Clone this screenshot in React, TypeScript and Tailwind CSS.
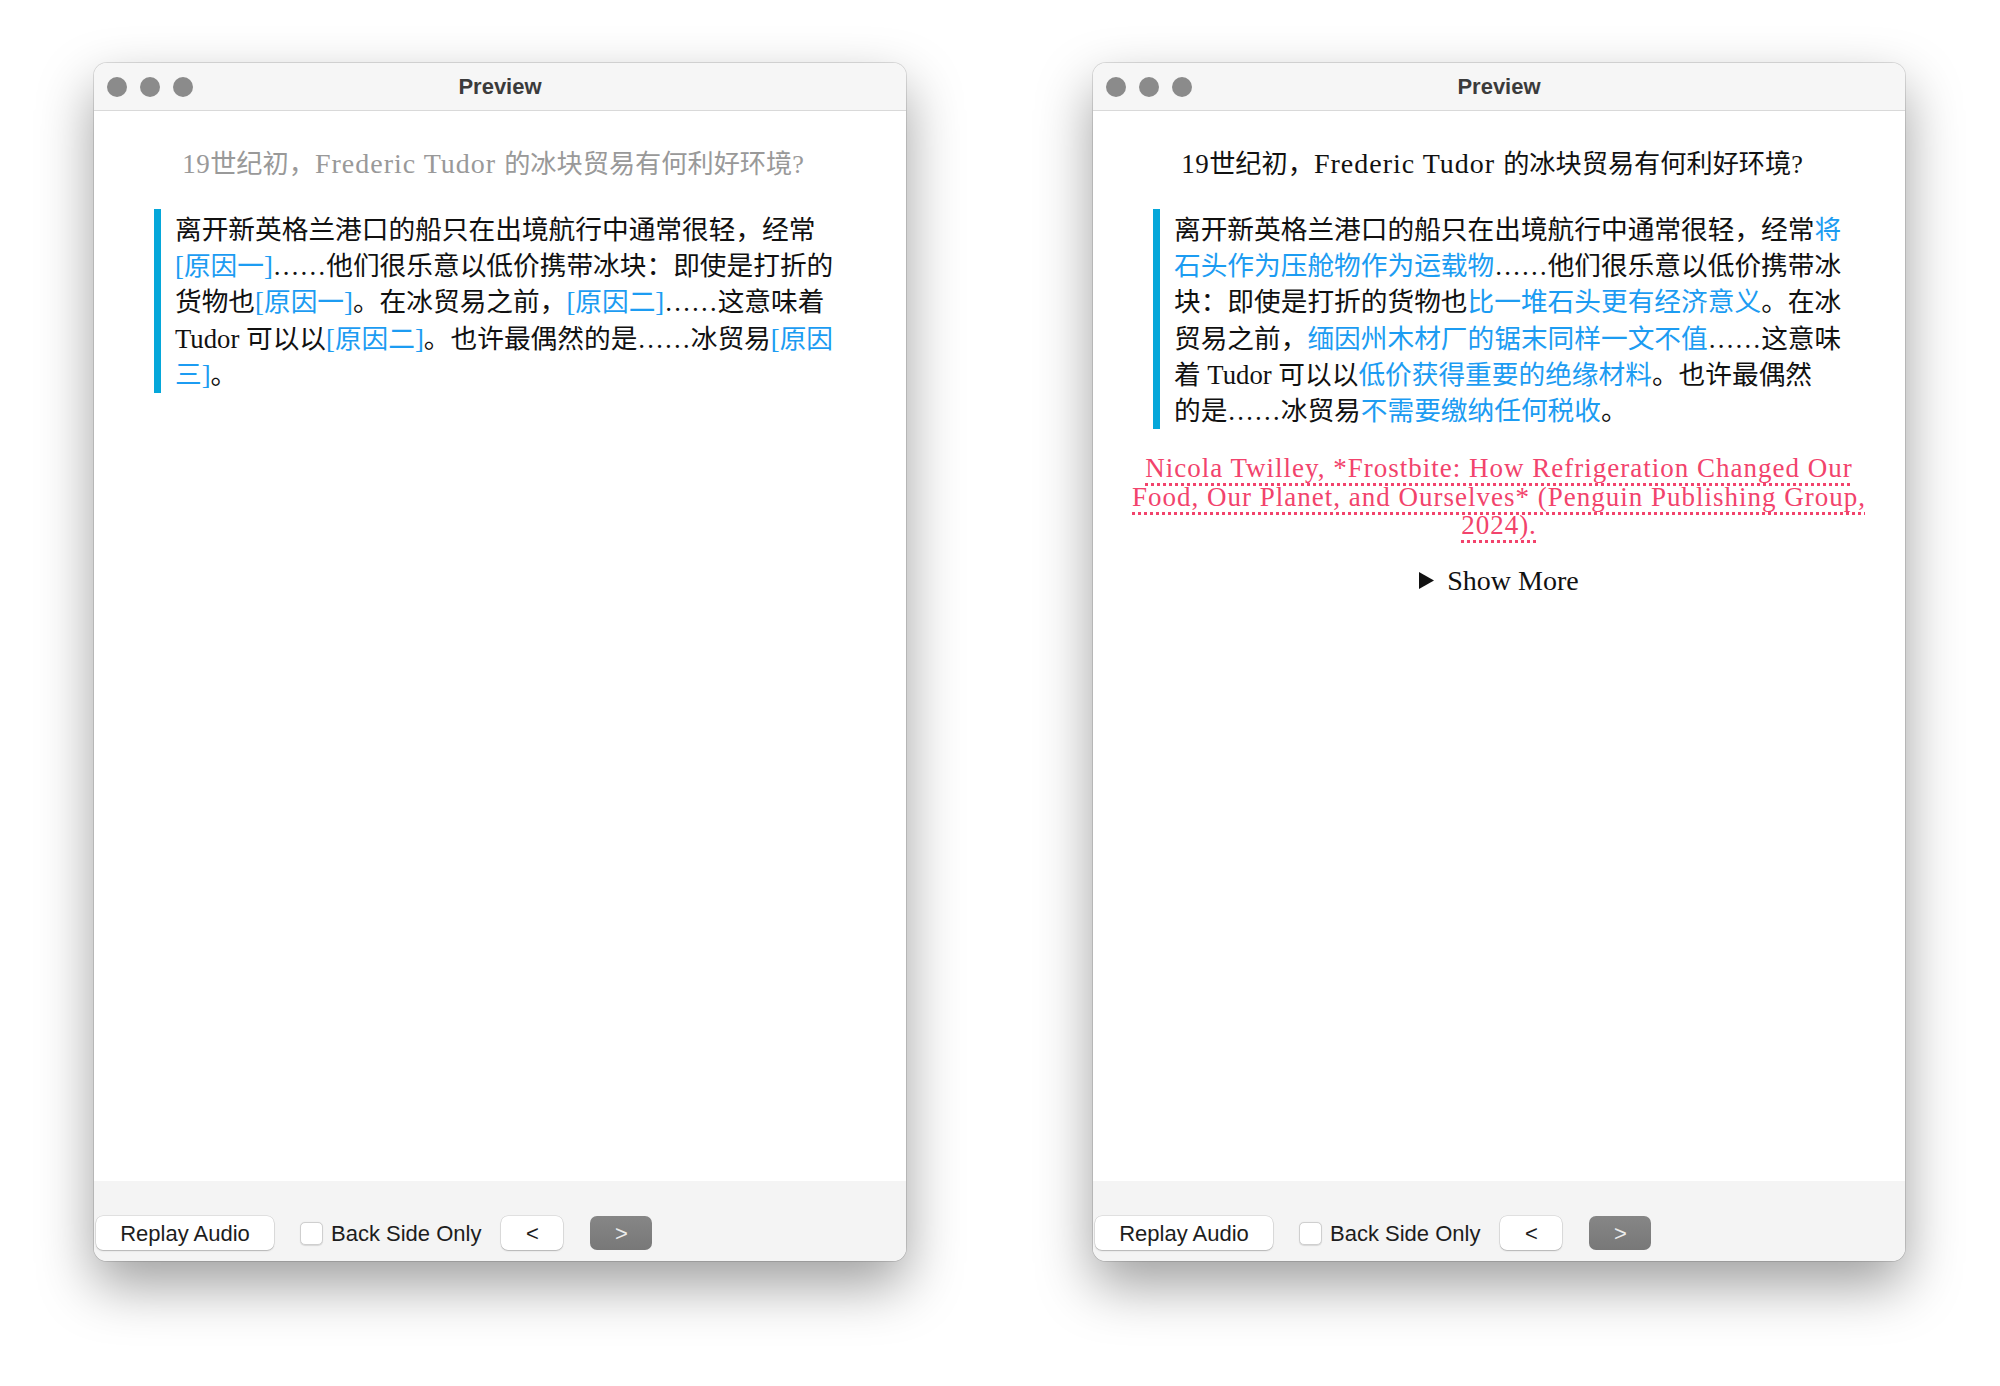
import React from "react";

type Seg = { t: string; hi?: boolean };

const SERIF = "font-['Liberation_Serif','Noto_Sans_CJK_SC',serif]";
const SANS = "font-['Liberation_Sans','Noto_Sans_CJK_SC',sans-serif]";

const FRONT_LINES: Seg[][] = [
  [{ t: "离开新英格兰港口的船只在出境航行中通常很轻，经常" }],
  [{ t: "[原因一]", hi: true }, { t: "……他们很乐意以低价携带冰块：即使是打折的" }],
  [{ t: "货物也" }, { t: "[原因一]", hi: true }, { t: "。在冰贸易之前，" }, { t: "[原因二]", hi: true }, { t: "……这意味着" }],
  [{ t: "Tudor 可以以" }, { t: "[原因二]", hi: true }, { t: "。也许最偶然的是……冰贸易" }, { t: "[原因", hi: true }],
  [{ t: "三]", hi: true }, { t: "。" }],
];

const BACK_LINES: Seg[][] = [
  [{ t: "离开新英格兰港口的船只在出境航行中通常很轻，经常" }, { t: "将", hi: true }],
  [{ t: "石头作为压舱物作为运载物", hi: true }, { t: "……他们很乐意以低价携带冰" }],
  [{ t: "块：即使是打折的货物也" }, { t: "比一堆石头更有经济意义", hi: true }, { t: "。在冰" }],
  [{ t: "贸易之前，" }, { t: "缅因州木材厂的锯末同样一文不值", hi: true }, { t: "……这意味" }],
  [{ t: "着 Tudor 可以以" }, { t: "低价获得重要的绝缘材料", hi: true }, { t: "。也许最偶然" }],
  [{ t: "的是……冰贸易" }, { t: "不需要缴纳任何税收", hi: true }, { t: "。" }],
];

const CITATION = [
  "Nicola Twilley, *Frostbite: How Refrigeration Changed Our",
  "Food, Our Planet, and Ourselves* (Penguin Publishing Group,",
  "2024).",
];

function TitleBar() {
  return (
    <div className="relative flex h-[48px] shrink-0 items-center border-b border-[#d9d9d9] bg-[#f6f6f6]">
      <div className="flex gap-[13px] pl-[13px]">
        <span className="h-5 w-5 rounded-full bg-[#8b8b8b]" />
        <span className="h-5 w-5 rounded-full bg-[#8b8b8b]" />
        <span className="h-5 w-5 rounded-full bg-[#8b8b8b]" />
      </div>
      <div className={`absolute inset-x-0 text-center text-[22px] font-bold text-[#3b3b3b] ${SANS}`}>Preview</div>
    </div>
  );
}

function Footer() {
  return (
    <div className={`flex h-[80px] shrink-0 items-end bg-[#f4f4f4] pb-[11px] pl-[2px] text-[22px] text-[#1d1d1d] ${SANS}`}>
      <button className="flex h-[34px] w-[178px] items-center justify-center rounded-[7px] bg-white shadow-[0_0_0_0.5px_rgba(0,0,0,0.15),0_1px_1.5px_rgba(0,0,0,0.2)]">
        Replay Audio
      </button>
      <div className="ml-[26px] flex h-[34px] items-center gap-[8px]">
        <span className="h-[23px] w-[23px] rounded-[5px] border border-[#cfcfcf] bg-white shadow-[0_0.5px_1px_rgba(0,0,0,0.12)]" />
        <span>Back Side Only</span>
      </div>
      <button className="ml-[20px] flex h-[34px] w-[62px] items-center justify-center rounded-[7px] bg-white shadow-[0_0_0_0.5px_rgba(0,0,0,0.15),0_1px_1.5px_rgba(0,0,0,0.2)]">
        &lt;
      </button>
      <button className="ml-[27px] flex h-[34px] w-[62px] items-center justify-center rounded-[7px] bg-gradient-to-b from-[#868686] to-[#787878] text-[#ececec]">
        &gt;
      </button>
    </div>
  );
}

function Question({ back }: { back?: boolean }) {
  return (
    <div className={`whitespace-nowrap pr-[14px] text-center text-[26.2px] leading-[36px] ${back ? "text-[#111]" : "text-[#999]"}`}>
      <span className="text-[27px] tracking-[0.5px]">19</span>世纪初，
      <span className="text-[28px] tracking-[1px]">Frederic Tudor </span>
      的冰块贸易有何利好环境?
    </div>
  );
}

function Answer({ lines }: { lines: Seg[][] }) {
  return (
    <div className="mx-[30px] mt-[26px] border-l-[7px] border-[#05a7da] pl-[14px] pt-[3px]">
      {lines.map((line, i) => (
        <div key={i} className="whitespace-nowrap text-[26.7px] leading-[36.2px] text-[#111]">
          {line.map((s, j) => (
            <span key={j} className={s.hi ? "text-[#1c9cf2]" : undefined}>
              {s.t}
            </span>
          ))}
        </div>
      ))}
    </div>
  );
}

function Window({ back }: { back?: boolean }) {
  return (
    <div className="flex h-[1198px] w-[812px] flex-col overflow-hidden rounded-[13px] bg-white shadow-[0_24px_55px_rgba(0,0,0,0.38),0_0_0_1px_rgba(0,0,0,0.12)]">
      <TitleBar />
      <div className={`flex-1 px-[30px] pt-[35px] ${SERIF}`}>
        <Question back={back} />
        <Answer lines={back ? BACK_LINES : FRONT_LINES} />
        {back && (
          <>
            <div className="-mx-[20px] mt-[25px] text-center text-[27px] leading-[28.5px] tracking-[1px] text-[#f2436c]">
              {CITATION.map((l) => (
                <div key={l} className="whitespace-nowrap">
                  <span className="underline decoration-dotted decoration-[3px] underline-offset-[6px]">{l}</span>
                </div>
              ))}
            </div>
            <div className="mt-[23px] flex items-center justify-center gap-[13px] text-[28px] leading-[36px] text-[#111]">
              <svg width="15" height="17" viewBox="0 0 15 17">
                <polygon points="0,0 15,8.5 0,17" fill="#111" />
              </svg>
              <span>Show More</span>
            </div>
          </>
        )}
      </div>
      <Footer />
    </div>
  );
}

export default function App() {
  return (
    <div className="flex h-[1386px] w-[2000px] gap-[187px] bg-white pl-[94px] pt-[63px]">
      <Window />
      <Window back />
    </div>
  );
}
